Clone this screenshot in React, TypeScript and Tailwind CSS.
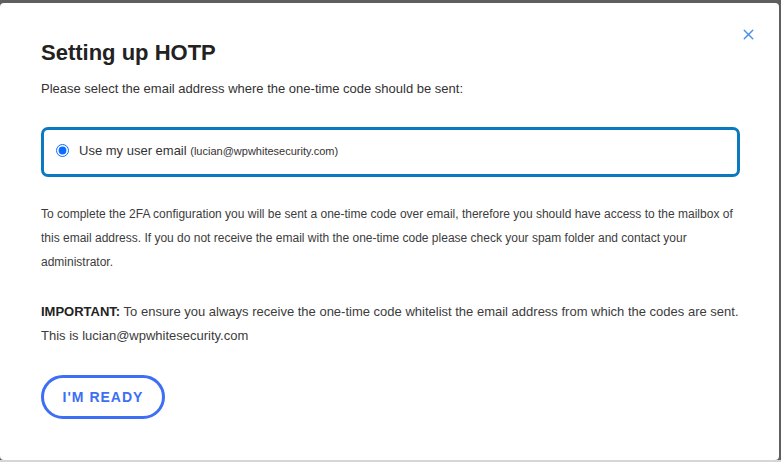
import { X } from 'lucide-react';

export default function App() {
  return (
    <div className="w-[781px] h-[462px] bg-[#5f5f5f] pt-[3px] overflow-hidden font-['Liberation_Sans',Arial,sans-serif]">
      <div className="relative w-[779px] h-[457px] bg-white rounded-[4px] px-[41px] pt-[36px]">
        {/* close */}
        <button className="absolute right-[22px] top-[23px] text-[#4a8fe9]">
          <X size={17} strokeWidth={2} />
        </button>

        <h2 className="text-[22px] leading-[28px] font-bold text-[#222]">Setting up HOTP</h2>
        <p className="mt-[12px] text-[13px] leading-[20px] text-[#333]">
          Please select the email address where the one-time code should be sent:
        </p>

        <label className="mt-[28px] flex items-center h-[50px] w-[699px] border-[3px] border-[#0b79bf] rounded-[7px] pl-[12px] pb-[3px]">
          <input type="radio" checked readOnly className="w-[13px] h-[13px] m-0 accent-[#0b6cff]" />
          <span className="ml-[10px] text-[13px] text-[#333]">
            Use my user email <span className="text-[11px]">(lucian@wpwhitesecurity.com)</span>
          </span>
        </label>

        <p className="mt-[25px] w-[699px] text-[12px] leading-[24px] text-[#3c3c3c]">
          To complete the 2FA configuration you will be sent a one-time code over email, therefore you should have access to the mailbox of this email address. If you do not receive the email with the one-time code please check your spam folder and contact your administrator.
        </p>

        <p className="mt-[26px] w-[699px] text-[13px] leading-[24px] text-[#3c3c3c]">
          <strong className="font-bold text-[#222]">IMPORTANT:</strong> To ensure you always receive the one-time code whitelist the email address from which the codes are sent. This is lucian@wpwhitesecurity.com
        </p>

        <button className="mt-[27px] h-[44px] w-[124px] rounded-full border-[3px] border-[#3d6ef5] text-[#3d6ef5] text-[14px] font-black tracking-[1px]">
          I'M READY
        </button>
      </div>
      <div className="h-[2px] bg-[#d6d6d6]" />
    </div>
  );
}
